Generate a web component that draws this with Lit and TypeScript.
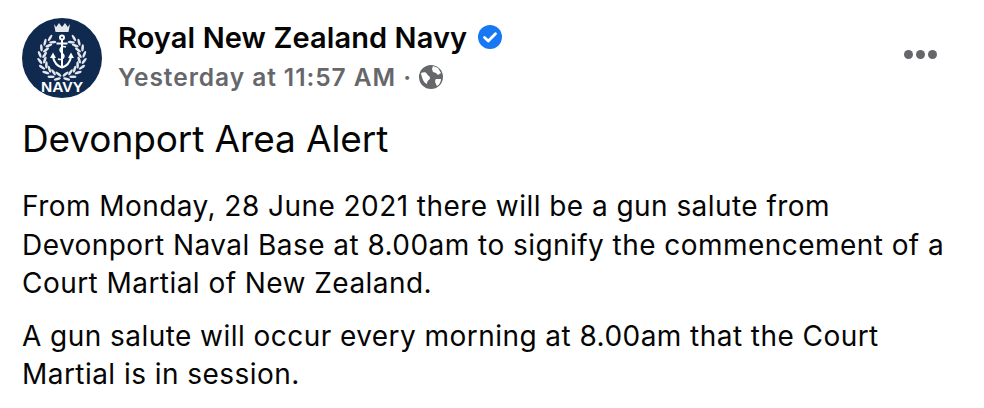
import { LitElement, html, css, svg } from "lit";
import { customElement } from "lit/decorators.js";

const wreath = (side: number) => {
  const out = [];
  for (let i = 0; i < 9; i++) {
    const t = 32 + i * 17;
    const a = (t * Math.PI) / 180;
    for (const [r, tilt] of [[22.5, 28], [17.5, -28]]) {
      const x = (40 + side * r * Math.sin(a)).toFixed(1);
      const y = (39 - r * Math.cos(a)).toFixed(1);
      const rot = side * (t - 90 + tilt);
      out.push(svg`<ellipse cx=${x} cy=${y} rx="1.3" ry="3.6" transform="rotate(${rot} ${x} ${y})" fill="#e4e7ec"/>`);
    }
  }
  return out;
};

@customElement("app-root")
export class AppRoot extends LitElement {
  static styles = css`
    :host { display: block; width: 984px; height: 408px; background: #fff; overflow: hidden;
      font-family: Inter, "Liberation Sans", sans-serif; color: #050505; }
    .post { padding: 18px 22px 0; }
    .head { display: flex; align-items: flex-start; gap: 16px; }
    .avatar { width: 80px; height: 80px; flex: none; display: block; }
    .meta { flex: 1; padding-top: 2px; }
    .name { display: flex; align-items: center; gap: 11px; font-size: 29px; line-height: 36px; font-weight: 600; letter-spacing: 0.1px; }
    .badge { margin-top: -3px; }
    .time { display: flex; align-items: center; gap: 7px; font-size: 24.5px; line-height: 36px; font-weight: 600; color: #65676b; margin-top: 3px; letter-spacing: 0.95px; }
    .more { display: flex; gap: 3px; margin: 32px 25px 0 0; }
    .more i { width: 9px; height: 9px; border-radius: 50%; background: #65676b; }
    .title { font-size: 37px; line-height: 44px; font-weight: 400; margin: 19px 0 0; letter-spacing: -0.1px; }
    p { margin: 0; font-size: 28px; line-height: 38.5px; font-weight: 400; letter-spacing: 0.45px; }
    .p1 { margin-top: 26px; width: 930px; }
    .p2 { margin-top: 14px; width: 880px; }
  `;

  render() {
    return html`<div class="post">
      <div class="head">
        <svg class="avatar" viewBox="0 0 80 80">
          <circle cx="40" cy="40" r="40" fill="#10294f"/>
          ${wreath(1)}${wreath(-1)}
          <path d="M32 6l2.2 3 2.8-4 3 4 3-4 2.8 4L48 6l-1.5 8h-13z" fill="#e4e7ec"/>
          <g fill="none" stroke="#fff" stroke-width="2">
            <circle cx="40" cy="19.5" r="2"/>
            <path d="M40 21.5v28M34.5 25.5h11M31 39c1 5 4 9 9 10.5 5-1.5 8-5.5 9-10.5"/>
            <path d="M44 29c-5-2-8 3-4 6s1 8-4 6" stroke-width="1.5"/>
          </g>
          <path d="M31 34.500l-3 5.500h6zM49 34.500l-3 5.500h6z" fill="#fff"/>
          <text x="40" y="74" text-anchor="middle" font-family="Liberation Sans" font-weight="700" font-size="14" textLength="42" lengthAdjust="spacingAndGlyphs" fill="#fff">NAVY</text>
        </svg>
        <div class="meta">
          <div class="name">Royal New Zealand Navy
            <svg class="badge" width="24" height="24" viewBox="0 0 24 24"><circle cx="12" cy="12" r="12" fill="#1877f2"/><path d="M6.500 12.500l3.800 3.600 7.200-7.400" fill="none" stroke="#fff" stroke-width="2.800" stroke-linecap="round" stroke-linejoin="round"/></svg>
          </div>
          <div class="time">Yesterday at 11:57 AM ·
            <svg width="24" height="24" viewBox="0 0 24 24"><circle cx="12" cy="12" r="12" fill="#65676b"/><path d="M2 8c3-1 5-1 6 1s3 2 3 4-3 2-3 6c-3-1-5-5-6-11zM14 1l5 2 3 5-3 2-2-2-3-1-1-3zM17 14h5c0 3-2 6-4 7-1-2-3-5-1-7z" fill="#fff"/></svg>
          </div>
        </div>
        <div class="more"><i></i><i></i><i></i></div>
      </div>
      <h1 class="title">Devonport Area Alert</h1>
      <p class="p1">From Monday, 28 June 2021 there will be a gun salute from Devonport Naval Base at 8.00am to signify the commencement of a Court Martial of New Zealand.</p>
      <p class="p2">A gun salute will occur every morning at 8.00am that the Court Martial is in session.</p>
    </div>`;
  }
}
